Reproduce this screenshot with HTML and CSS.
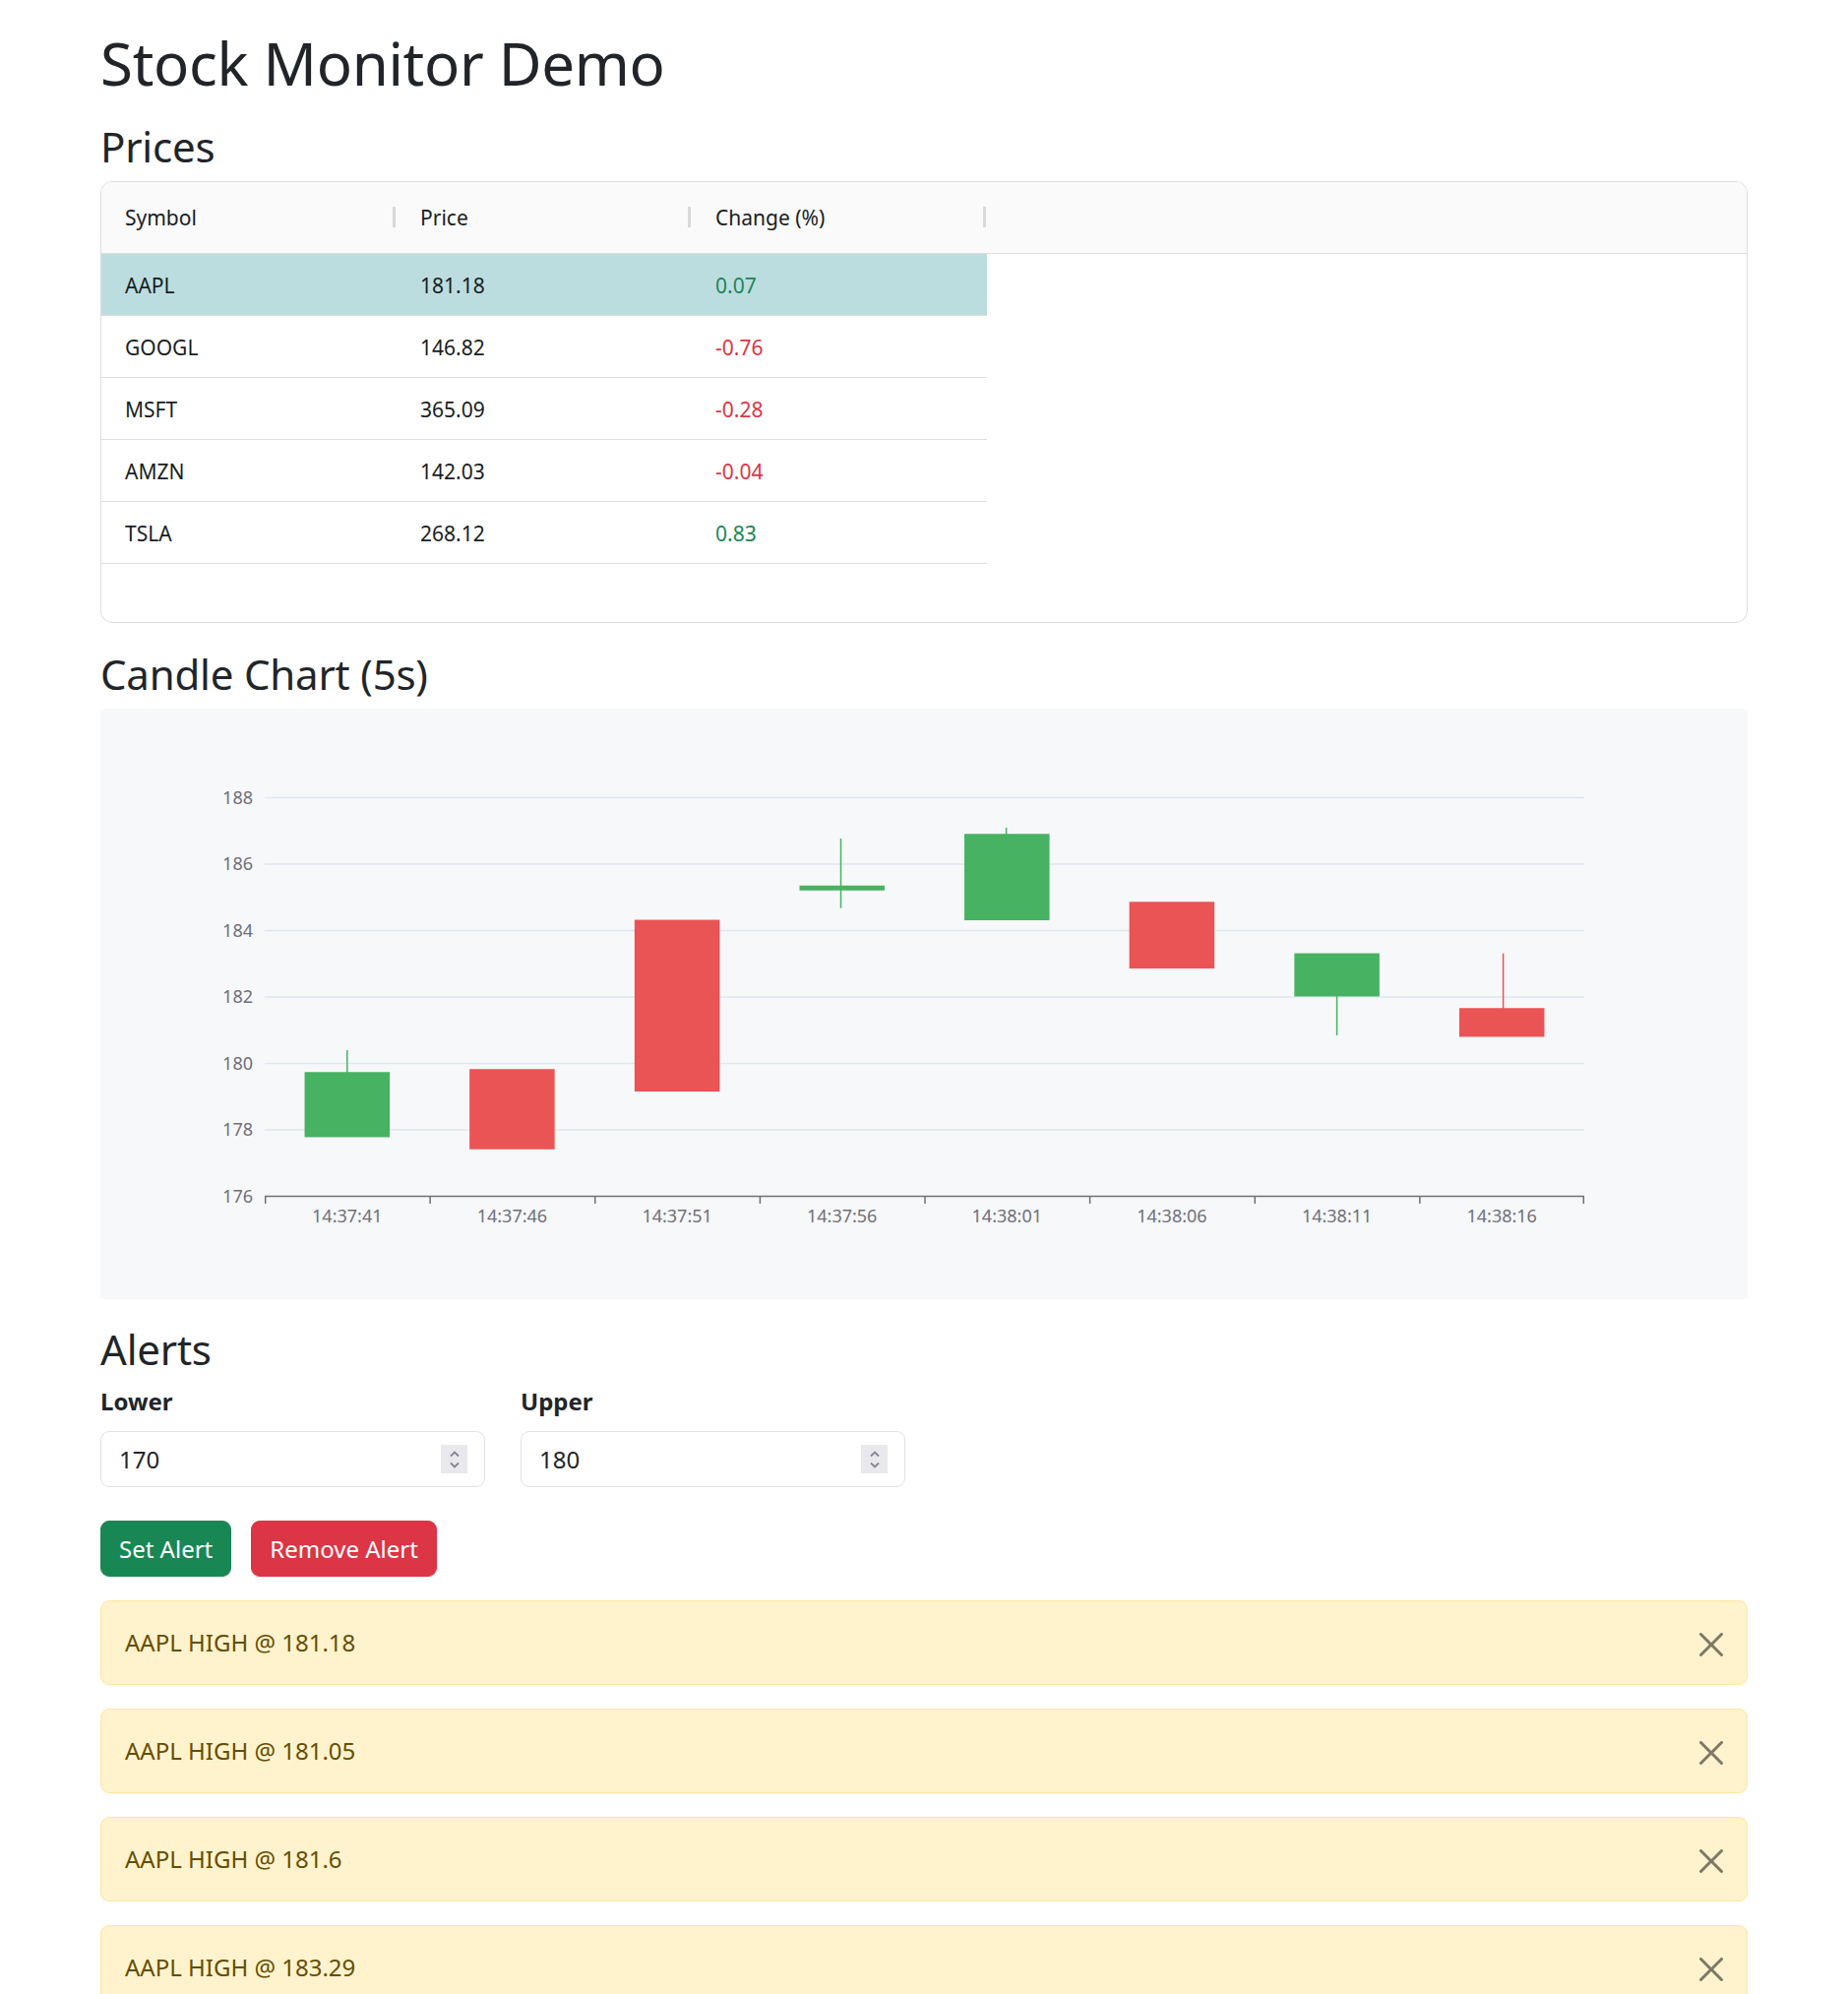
FILE: index.html
```html
<!DOCTYPE html>
<html lang="en">
<head>
<meta charset="utf-8">
<title>Stock Monitor Demo</title>
<link rel="stylesheet" href="styles.css">
</head>
<body>
<div class="container">
  <h1 class="title">Stock Monitor Demo</h1>

  <h3 class="section-title">Prices</h3>
  <div class="grid">
    <div class="grid-header">
      <div class="hcell"><span class="hlabel">Symbol</span><span class="sep"></span></div>
      <div class="hcell"><span class="hlabel">Price</span><span class="sep"></span></div>
      <div class="hcell"><span class="hlabel">Change (%)</span><span class="sep"></span></div>
    </div>
    <div class="grid-body">
      <div class="grid-row selected">
        <div class="cell">AAPL</div><div class="cell">181.18</div><div class="cell up">0.07</div>
      </div>
      <div class="grid-row">
        <div class="cell">GOOGL</div><div class="cell">146.82</div><div class="cell down">-0.76</div>
      </div>
      <div class="grid-row">
        <div class="cell">MSFT</div><div class="cell">365.09</div><div class="cell down">-0.28</div>
      </div>
      <div class="grid-row">
        <div class="cell">AMZN</div><div class="cell">142.03</div><div class="cell down">-0.04</div>
      </div>
      <div class="grid-row">
        <div class="cell">TSLA</div><div class="cell">268.12</div><div class="cell up">0.83</div>
      </div>
    </div>
  </div>

  <h3 class="section-title">Candle Chart (5s)</h3>
  <div class="chart">
    <svg class="chart-svg" width="1674" height="600" viewBox="0 0 1674 600">
      <g class="grid-lines" stroke="#e0e6f1" stroke-width="1.5">
        <line x1="167" y1="90.5" x2="1508" y2="90.5"/>
        <line x1="167" y1="158" x2="1508" y2="158"/>
        <line x1="167" y1="225.5" x2="1508" y2="225.5"/>
        <line x1="167" y1="293" x2="1508" y2="293"/>
        <line x1="167" y1="360.5" x2="1508" y2="360.5"/>
        <line x1="167" y1="428" x2="1508" y2="428"/>
      </g>
      <g class="axis" stroke="#6e7079" stroke-width="1.5">
        <line x1="167" y1="495.5" x2="1508" y2="495.5"/>
        <line x1="167.7" y1="495.5" x2="167.7" y2="503"/>
        <line x1="335.1" y1="495.5" x2="335.1" y2="503"/>
        <line x1="502.7" y1="495.5" x2="502.7" y2="503"/>
        <line x1="670.4" y1="495.5" x2="670.4" y2="503"/>
        <line x1="838" y1="495.5" x2="838" y2="503"/>
        <line x1="1005.6" y1="495.5" x2="1005.6" y2="503"/>
        <line x1="1173.3" y1="495.5" x2="1173.3" y2="503"/>
        <line x1="1340.9" y1="495.5" x2="1340.9" y2="503"/>
        <line x1="1507.3" y1="495.5" x2="1507.3" y2="503"/>
      </g>
      <g class="ylabels" fill="#6e7079" text-anchor="end">
        <text x="155" y="96.5">188</text>
        <text x="155" y="164">186</text>
        <text x="155" y="231.5">184</text>
        <text x="155" y="299">182</text>
        <text x="155" y="366.5">180</text>
        <text x="155" y="434">178</text>
        <text x="155" y="501.5">176</text>
      </g>
      <g class="xlabels" fill="#6e7079" text-anchor="middle">
        <text x="250.8" y="522">14:37:41</text>
        <text x="418.4" y="522">14:37:46</text>
        <text x="586.1" y="522">14:37:51</text>
        <text x="753.7" y="522">14:37:56</text>
        <text x="921.3" y="522">14:38:01</text>
        <text x="1088.9" y="522">14:38:06</text>
        <text x="1256.6" y="522">14:38:11</text>
        <text x="1424.2" y="522">14:38:16</text>
      </g>
      <g class="candles-up" fill="#47b262" stroke="#47b262" stroke-width="1.5">
        <line x1="250.8" y1="347" x2="250.8" y2="370"/>
        <rect x="208.3" y="370" width="85" height="64.7"/>
        <line x1="752.5" y1="132" x2="752.5" y2="202.7"/>
        <rect x="711.2" y="180.5" width="85" height="3.5"/>
        <line x1="920.6" y1="121" x2="920.6" y2="128"/>
        <rect x="878.8" y="128" width="85" height="86.3"/>
        <line x1="1256.6" y1="291.7" x2="1256.6" y2="332"/>
        <rect x="1214.1" y="249.3" width="85" height="42.4"/>
      </g>
      <g class="candles-down" fill="#eb5454" stroke="#eb5454" stroke-width="1.5">
        <rect x="375.9" y="367" width="85" height="80"/>
        <rect x="543.6" y="215.3" width="85" height="173"/>
        <rect x="1046.4" y="197" width="85" height="66.3"/>
        <line x1="1425.6" y1="248.7" x2="1425.6" y2="305"/>
        <rect x="1381.7" y="305" width="85" height="27.7"/>
      </g>
    </svg>
  </div>

  <h3 class="section-title">Alerts</h3>
  <div class="form-row">
    <div class="form-col">
      <label class="form-label" for="lower">Lower</label>
      <div class="input-wrap">
        <input class="form-control" id="lower" type="number" value="170">
        <span class="spinner" aria-hidden="true">
          <svg width="12" height="22" viewBox="0 0 12 22"><path d="M2 7.5 L6 3.5 L10 7.5 M2 14.5 L6 18.5 L10 14.5" fill="none" stroke="#86858f" stroke-width="1.8"/></svg>
        </span>
      </div>
    </div>
    <div class="form-col">
      <label class="form-label" for="upper">Upper</label>
      <div class="input-wrap">
        <input class="form-control" id="upper" type="number" value="180">
        <span class="spinner" aria-hidden="true">
          <svg width="12" height="22" viewBox="0 0 12 22"><path d="M2 7.5 L6 3.5 L10 7.5 M2 14.5 L6 18.5 L10 14.5" fill="none" stroke="#86858f" stroke-width="1.8"/></svg>
        </span>
      </div>
    </div>
  </div>

  <div class="btn-row">
    <button class="btn btn-success" type="button">Set Alert</button>
    <button class="btn btn-danger" type="button">Remove Alert</button>
  </div>

  <div class="alert-list">
    <div class="alert">
      <span>AAPL HIGH @ 181.18</span>
      <button class="btn-close" type="button" aria-label="Close"><svg width="24" height="24" viewBox="0 0 16 16"><path d="M.293.293a1 1 0 0 1 1.414 0L8 6.586 14.293.293a1 1 0 1 1 1.414 1.414L9.414 8l6.293 6.293a1 1 0 0 1-1.414 1.414L8 9.414l-6.293 6.293a1 1 0 0 1-1.414-1.414L6.586 8 .293 1.707a1 1 0 0 1 0-1.414z"/></svg></button>
    </div>
    <div class="alert">
      <span>AAPL HIGH @ 181.05</span>
      <button class="btn-close" type="button" aria-label="Close"><svg width="24" height="24" viewBox="0 0 16 16"><path d="M.293.293a1 1 0 0 1 1.414 0L8 6.586 14.293.293a1 1 0 1 1 1.414 1.414L9.414 8l6.293 6.293a1 1 0 0 1-1.414 1.414L8 9.414l-6.293 6.293a1 1 0 0 1-1.414-1.414L6.586 8 .293 1.707a1 1 0 0 1 0-1.414z"/></svg></button>
    </div>
    <div class="alert">
      <span>AAPL HIGH @ 181.6</span>
      <button class="btn-close" type="button" aria-label="Close"><svg width="24" height="24" viewBox="0 0 16 16"><path d="M.293.293a1 1 0 0 1 1.414 0L8 6.586 14.293.293a1 1 0 1 1 1.414 1.414L9.414 8l6.293 6.293a1 1 0 0 1-1.414 1.414L8 9.414l-6.293 6.293a1 1 0 0 1-1.414-1.414L6.586 8 .293 1.707a1 1 0 0 1 0-1.414z"/></svg></button>
    </div>
    <div class="alert">
      <span>AAPL HIGH @ 183.29</span>
      <button class="btn-close" type="button" aria-label="Close"><svg width="24" height="24" viewBox="0 0 16 16"><path d="M.293.293a1 1 0 0 1 1.414 0L8 6.586 14.293.293a1 1 0 1 1 1.414 1.414L9.414 8l6.293 6.293a1 1 0 0 1-1.414 1.414L8 9.414l-6.293 6.293a1 1 0 0 1-1.414-1.414L6.586 8 .293 1.707a1 1 0 0 1 0-1.414z"/></svg></button>
    </div>
  </div>
</div>
</body>
</html>
```

FILE: styles.css
```css
* { box-sizing: border-box; }

html, body {
  margin: 0;
  padding: 0;
  background: #fff;
}

body {
  font-family: "Noto Sans", "Open Sans", "Liberation Sans", sans-serif;
  font-size: 24px;
  line-height: 1.5;
  color: #212529;
}

.container {
  width: 1710px;
  margin: 0 auto;
  padding: 25.5px 18px 0;
}

.title {
  font-size: 60px;
  font-weight: 400;
  line-height: 72px;
  margin: 0 0 21.5px;
  padding-top: 2.5px;
  letter-spacing: -0.3px;
}

.section-title {
  font-size: 42px;
  font-weight: 400;
  line-height: 50.4px;
  margin: 0 0 9.5px;
  padding-top: 2.5px;
  letter-spacing: -0.2px;
}

/* ---------- price grid ---------- */
.grid {
  height: 449px;
  border: 1px solid #dddddd;
  border-radius: 12px;
  overflow: hidden;
  margin-bottom: 24.5px;
  font-size: 21px;
  color: #181d1f;
}

.grid-header {
  display: flex;
  height: 73px;
  background: #fafafa;
  border-bottom: 1px solid #dddddd;
}

.hcell {
  width: 300px;
  display: flex;
  align-items: center;
  justify-content: space-between;
  padding-left: 24px;
  padding-right: 1px;
}

.hlabel {
  padding-top: 2px;
}

.sep {
  width: 3px;
  height: 21px;
  background: #d9d9d9;
}

.grid-row {
  display: flex;
  width: 900px;
  height: 63px;
  border-bottom: 1px solid #dddddd;
  align-items: center;
}

.grid-row.selected {
  background: #bcdde0;
}

.cell {
  width: 300px;
  padding-left: 24px;
  padding-top: 4px;
}

.cell.up { color: #198754; }
.cell.down { color: #dc3545; }

/* ---------- chart ---------- */
.chart {
  height: 600px;
  background: #f7f8fa;
  margin-bottom: 24px;
}

.chart-svg {
  display: block;
  font-family: "Noto Sans", "Open Sans", sans-serif;
  font-size: 18px;
}

/* ---------- form ---------- */
.form-row {
  display: flex;
  gap: 36px;
  margin-bottom: 34px;
}

.form-col {
  width: 391px;
}

.form-label {
  display: block;
  font-weight: 700;
  margin-bottom: 12px;
  line-height: 36px;
}

.input-wrap {
  position: relative;
}

.form-control {
  display: block;
  width: 100%;
  height: 57px;
  padding: 0 18px;
  font: inherit;
  color: #212529;
  background: #fff;
  border: 1px solid #dee2e6;
  border-radius: 9px;
  -moz-appearance: textfield;
}

.form-control::-webkit-inner-spin-button,
.form-control::-webkit-outer-spin-button {
  -webkit-appearance: none;
  margin: 0;
}

.spinner {
  position: absolute;
  right: 18px;
  top: 14px;
  width: 27px;
  height: 29px;
  background: #e9e9ed;
  display: flex;
  align-items: center;
  justify-content: center;
}

.spinner svg { display: block; }

.btn-row {
  display: flex;
  gap: 20px;
  margin-bottom: 24px;
}

.btn {
  height: 57px;
  padding: 0 18px;
  font: inherit;
  color: #fff;
  border: 1px solid transparent;
  border-radius: 9px;
}

.btn-success { background: #198754; border-color: #198754; }
.btn-danger { background: #dc3545; border-color: #dc3545; }

/* ---------- alerts ---------- */
.alert {
  display: flex;
  align-items: center;
  justify-content: space-between;
  height: 86px;
  padding: 0 24px;
  margin-bottom: 24px;
  color: #664d03;
  background: #fff3cd;
  border: 1px solid #ffe69c;
  border-radius: 9px;
}

.btn-close {
  width: 24px;
  height: 24px;
  padding: 0;
  margin-top: 4px;
  border: 0;
  background: transparent;
  opacity: 0.5;
  display: flex;
}

.btn-close svg { display: block; fill: #000; }
```
